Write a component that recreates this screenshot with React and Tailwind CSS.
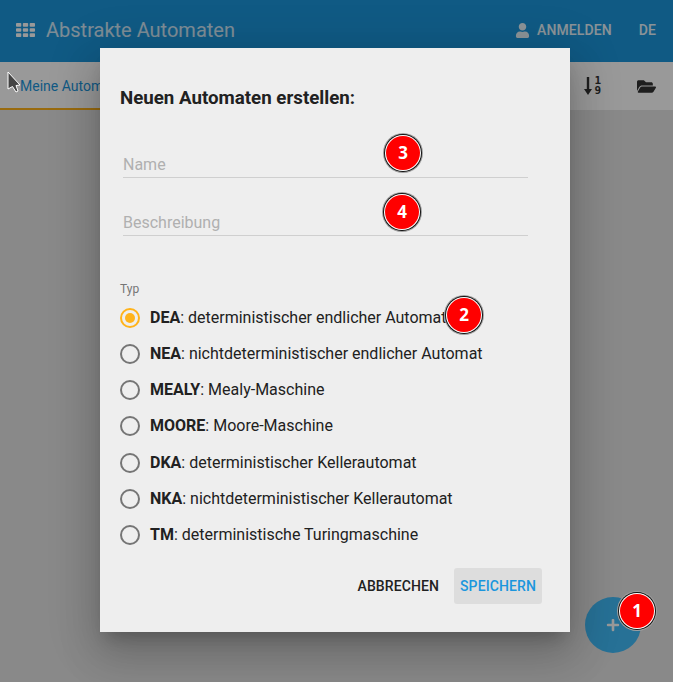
import React from 'react';
import { FaUser, FaFolderOpen, FaPlus } from 'react-icons/fa';

const font = { fontFamily: 'Roboto, sans-serif' };

const types = [
  { key: 'DEA', text: 'deterministischer endlicher Automat', checked: true },
  { key: 'NEA', text: 'nichtdeterministischer endlicher Automat' },
  { key: 'MEALY', text: 'Mealy-Maschine' },
  { key: 'MOORE', text: 'Moore-Maschine' },
  { key: 'DKA', text: 'deterministischer Kellerautomat' },
  { key: 'NKA', text: 'nichtdeterministischer Kellerautomat' },
  { key: 'TM', text: 'deterministische Turingmaschine' },
];

const Badge = ({ n, className }) => (
  <div
    className={`absolute w-[34px] h-[34px] rounded-full bg-[#ff0000] shadow-[0_0_0_1px_#ffffff,0_0_0_2px_#111111,0_0_0_3px_#a0a0a0] flex items-center justify-center text-white font-bold text-[17px] ${className}`}
    style={{ fontFamily: '"Open Sans", sans-serif' }}
  >
    {n}
  </div>
);

const GridIcon = () => (
  <svg width="19" height="14" viewBox="0 0 19 14" fill="currentColor">
    <rect x="0" y="0" width="5.3" height="3.7" rx="0.8" />
    <rect x="6.85" y="0" width="5.3" height="3.7" rx="0.8" />
    <rect x="13.7" y="0" width="5.3" height="3.7" rx="0.8" />
    <rect x="0" y="5.15" width="5.3" height="3.7" rx="0.8" />
    <rect x="6.85" y="5.15" width="5.3" height="3.7" rx="0.8" />
    <rect x="13.7" y="5.15" width="5.3" height="3.7" rx="0.8" />
    <rect x="0" y="10.3" width="5.3" height="3.7" rx="0.8" />
    <rect x="6.85" y="10.3" width="5.3" height="3.7" rx="0.8" />
    <rect x="13.7" y="10.3" width="5.3" height="3.7" rx="0.8" />
  </svg>
);

const Radio = ({ checked }) => (
  <div className={`w-5 h-5 rounded-full border-2 flex items-center justify-center ${checked ? 'border-[#ffb31a]' : 'border-[#757575]'}`}>
    {checked && <div className="w-[10px] h-[10px] rounded-full bg-[#ffb31a]" />}
  </div>
);

const Field = ({ label }) => (
  <div className="ml-[3px] w-[405px] h-[34px] border-b border-[#cfcfcf] flex items-end text-[16px] text-[#b0b0b0]">
    {label}
  </div>
);

export default function App() {
  return (
    <div className="relative w-[673px] h-[682px] overflow-hidden bg-[#e4e4e4]" style={font}>
      {/* --- header --- */}
      <div className="h-[62px] bg-[#1b96dd] flex items-center pl-4 pr-[17px] pb-[2px] text-white">
        <GridIcon />
        <span className="ml-[11px] text-[20px] text-white/80">Abstrakte Automaten</span>
        <div className="ml-auto flex items-center text-[14px] font-medium tracking-[0.1px] text-white/90">
          <FaUser size={15} className="mr-[7px]" />
          <span>ANMELDEN</span>
          <span className="ml-[27px]">DE</span>
        </div>
      </div>

      {/* --- toolbar --- */}
      <div className="h-[48px] bg-white flex items-center">
        <div className="w-[100px] h-full border-b-2 border-[#ffb31a] pl-[20px] pt-[14px] text-[14px] text-[#1b96dd] whitespace-nowrap overflow-hidden">
          Meine Automaten
        </div>
        <div className="ml-auto flex items-center text-[#333]">
          <svg width="8" height="18" viewBox="0 0 8 18" className="mr-[2px]" fill="currentColor">
            <path d="M2.8 0h2.4v12h2.8l-4 6-4-6h2.8z" />
          </svg>
          <div className="flex flex-col items-center mr-[36px] text-[11px] leading-[10px] font-bold" style={{ fontFamily: '"DejaVu Sans Mono", monospace' }}>
            <span>1</span>
            <span>9</span>
          </div>
          <FaFolderOpen size={19} className="mr-[17px]" />
        </div>
      </div>

      {/* --- fab --- */}
      <div className="absolute left-[585px] top-[597px] w-[56px] h-[56px] rounded-full bg-[#41bcfb] flex items-center justify-center text-white">
        <FaPlus size={14} />
      </div>

      {/* --- dimming layer --- */}
      <div className="absolute inset-0 bg-black/40" />

      {/* --- cursor --- */}
      <svg className="absolute left-[7px] top-[71px]" width="14" height="22" viewBox="0 0 14 22">
        <path d="M1 1 L1 18 L5.5 15.5 L9 21 L11 20 L9 14.5 L13 14 Z" fill="#444" stroke="#fff" strokeWidth="1" />
      </svg>

      {/* --- dialog --- */}
      <div className="absolute left-[100px] top-[48px] w-[470px] h-[584px] bg-[#eeeeee] shadow-[0_11px_15px_-7px_rgba(0,0,0,0.2),0_24px_38px_3px_rgba(0,0,0,0.14),0_9px_46px_8px_rgba(0,0,0,0.12)] pl-[20px] pt-[40px] flex flex-col">
        <h2 className="text-[18.72px] leading-[21px] font-bold text-[#212121]">Neuen Automaten erstellen:</h2>
        <div className="mt-[35px]"><Field label="Name" /></div>
        <div className="mt-[24px]"><Field label="Beschreibung" /></div>
        <div className="mt-[45px] text-[12px] leading-[16px] text-[#757575]">Typ</div>
        <div className="mt-[11px] flex flex-col gap-[16.15px]">
          {types.map((t) => (
            <div key={t.key} className="flex items-center h-[20px] text-[16px] text-[#212121]">
              <Radio checked={t.checked} />
              <span className="ml-[10px] whitespace-nowrap">
                <b className="font-bold">{t.key}</b>: {t.text}
              </span>
            </div>
          ))}
        </div>
        <div className="mt-auto mb-[28px] mr-[28px] self-end flex items-center gap-[9px] text-[14px] font-medium tracking-[0.1px]">
          <span className="px-[6px] text-[#212121]">ABBRECHEN</span>
          <span className="w-[88px] h-[36px] bg-[#dddddd] rounded-[3px] flex items-center justify-center text-[#1b96dd]">SPEICHERN</span>
        </div>
      </div>

      {/* --- numbered markers --- */}
      <Badge n="1" className="left-[620px] top-[594px]" />
      <Badge n="2" className="left-[447px] top-[298px]" />
      <Badge n="3" className="left-[386px] top-[136px]" />
      <Badge n="4" className="left-[385px] top-[195px]" />
    </div>
  );
}
